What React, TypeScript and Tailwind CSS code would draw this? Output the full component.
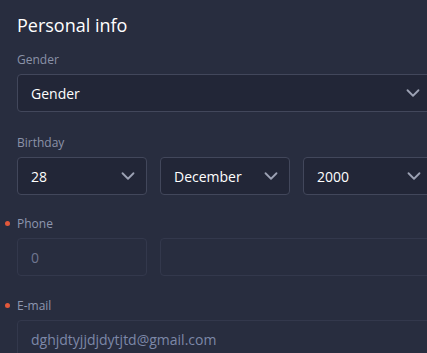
import { ChevronDown } from 'lucide-react'

function Chevron() {
  return <ChevronDown className="h-[22px] w-[22px] text-[#9ca1b3]" strokeWidth={2} />
}

function SelectBox({ value, className }: { value: string; className: string }) {
  return (
    <div
      className={`flex h-[38px] items-center justify-between rounded-[4px] border border-[#42475b] bg-[#222637] pl-[13px] pr-[7px] text-[14px] text-white ${className}`}
    >
      <span>{value}</span>
      <Chevron />
    </div>
  )
}

function Label({ text, required }: { text: string; required?: boolean }) {
  return (
    <div
      className={`relative mb-[6px] h-4 text-[12px] leading-4 ${required ? 'text-[#8e97b0]' : 'text-[#8b92a8]'}`}
    >
      {required && (
        <span className="absolute left-[-12px] top-[5px] h-[5px] w-[5px] rounded-full bg-[#e2583b]" />
      )}
      {text}
    </div>
  )
}

export default function App() {
  const inputCls =
    'flex h-[38px] items-center rounded-[4px] border border-[#33384c] bg-[#282d3f] pl-[13px] text-[14px]'

  return (
    <div
      className="h-[353px] w-[427px] overflow-hidden bg-[#282d3f]"
      style={{ fontFamily: '"Open Sans", sans-serif' }}
    >
      <div className="w-[440px] pl-[17px] pt-[11px]">
        <h1 className="text-[18px] leading-7 text-white">Personal info</h1>

        <div className="mt-[13px]">
          <Label text="Gender" />
          <SelectBox value="Gender" className="w-[415px]" />
        </div>

        <div className="mt-[23px]">
          <Label text="Birthday" />
          <div className="flex gap-[13px]">
            <SelectBox value="28" className="w-[130px] shrink-0" />
            <SelectBox value="December" className="w-[130px] shrink-0" />
            <SelectBox value="2000" className="w-[130px] shrink-0" />
          </div>
        </div>

        <div className="mt-[21px]">
          <Label text="Phone" required />
          <div className="flex gap-[13px]">
            <div className={`${inputCls} w-[130px] shrink-0 text-[#6f7690]`}>0</div>
            <div className={`${inputCls} w-[300px] shrink-0`} />
          </div>
        </div>

        <div className="mt-[22px]">
          <Label text="E-mail" required />
          <div className={`${inputCls} w-[420px] text-[#7d88a8]`}>dghjdtyjjdjdytjtd@gmail.com</div>
        </div>
      </div>
    </div>
  )
}
